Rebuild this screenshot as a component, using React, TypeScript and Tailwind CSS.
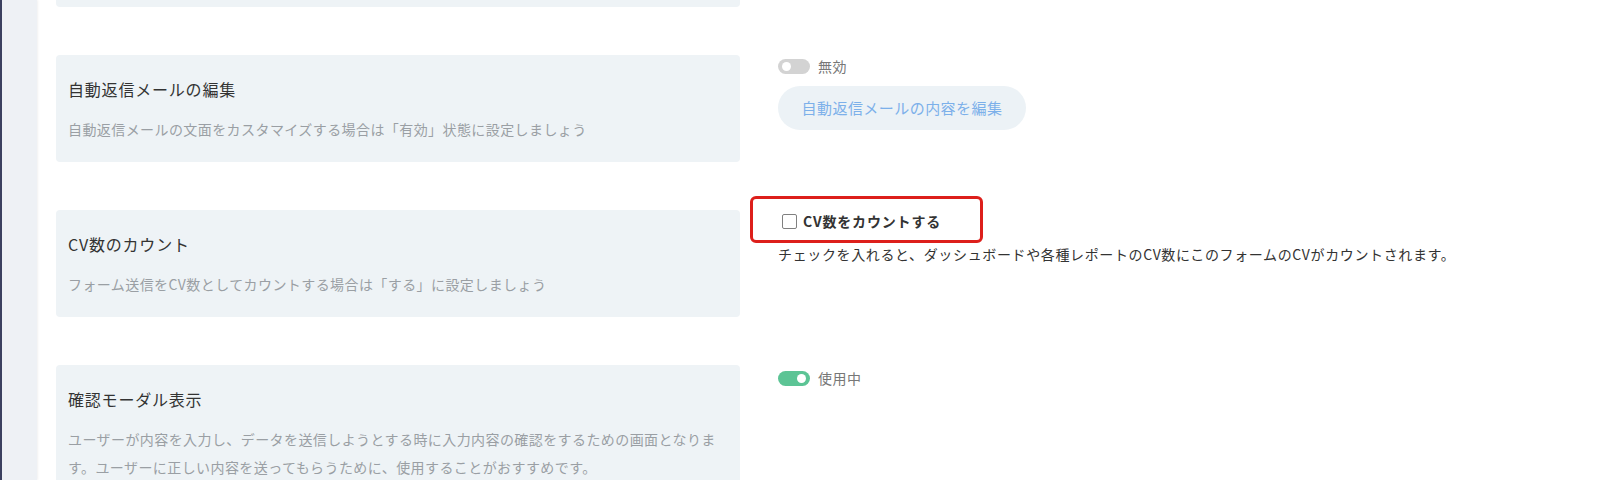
const font = { fontFamily: '"Noto Sans CJK JP", "Noto Sans", sans-serif' };

const Toggle = ({ on, label }: { on: boolean; label: string }) => (
  <div className="flex items-center h-[22px] gap-2">
    <span
      className={`relative inline-block w-[32px] h-[15px] rounded-full ${on ? 'bg-[#5cc495]' : 'bg-[#d3d3d3]'}`}
    >
      <span
        className={`absolute top-[3px] w-[9px] h-[9px] rounded-full bg-white ${on ? 'right-[4px]' : 'left-[4px]'}`}
      />
    </span>
    <span className="text-[14px] text-[#777] tracking-[0.04em]">{label}</span>
  </div>
);

const Card = ({ title, desc }: { title: string; desc: string }) => (
  <div className="w-[684px] shrink-0 bg-[#eef3f6] rounded-[4px] px-3 pt-5 pb-[19px]">
    <div className="text-[16px] leading-[28px] text-[#333] tracking-[0.05em]">{title}</div>
    <div className="mt-3 text-[14px] leading-[28px] text-[#9a9fa4] tracking-[0.03em]">{desc}</div>
  </div>
);

export default function App() {
  return (
    <div className="w-[1600px] h-[480px] overflow-hidden flex bg-white" style={font}>
      <div className="w-[2px] bg-[#3c4160] shrink-0" />
      <div className="w-[35px] bg-[#eef1f5] shrink-0 shadow-[1px_0_2px_rgba(0,0,0,0.06)]" />

      <div className="flex-1 pl-[19px] flex flex-col gap-[48px] -mt-[100px]">
        {/* row 1 (cut off at top) */}
        <div className="flex gap-[38px]">
          <div className="w-[684px] h-[107px] bg-[#eef3f6] rounded-[4px]" />
        </div>

        {/* row 2 */}
        <div className="flex gap-[38px]">
          <Card
            title="自動返信メールの編集"
            desc="自動返信メールの文面をカスタマイズする場合は「有効」状態に設定しましょう"
          />
          <div className="flex flex-col">
            <Toggle on={false} label="無効" />
            <button className="mt-[9px] w-[248px] h-[44px] rounded-full bg-[#ecf2f6] text-[15px] text-[#7cb0ea] tracking-[0.03em]">
              自動返信メールの内容を編集
            </button>
          </div>
        </div>

        {/* row 3 */}
        <div className="flex gap-[38px]">
          <Card
            title="CV数のカウント"
            desc="フォーム送信をCV数としてカウントする場合は「する」に設定しましょう"
          />
          <div className="flex flex-col">
            <label className="relative flex items-center h-[22px] gap-[6px] pl-[4px]">
              <span className="w-[15px] h-[15px] border border-[#808080] rounded-[2px] bg-white" />
              <span className="text-[14px] font-bold text-[#333] tracking-[0.06em]">CV数をカウントする</span>
              <span className="absolute left-[-28px] top-[-14px] w-[233px] h-[47px] border-[3px] border-[#dd1f1b] rounded-[6px] pointer-events-none" />
            </label>
            <p className="mt-[12px] text-[14px] leading-[20px] text-[#333] tracking-[0.045em]">
              チェックを入れると、ダッシュボードや各種レポートのCV数にこのフォームのCVがカウントされます。
            </p>
          </div>
        </div>

        {/* row 4 */}
        <div className="flex gap-[38px]">
          <Card
            title="確認モーダル表示"
            desc="ユーザーが内容を入力し、データを送信しようとする時に入力内容の確認をするための画面となります。ユーザーに正しい内容を送ってもらうために、使用することがおすすめです。"
          />
          <div className="flex flex-col pt-[2px]">
            <Toggle on={true} label="使用中" />
          </div>
        </div>
      </div>
    </div>
  );
}
